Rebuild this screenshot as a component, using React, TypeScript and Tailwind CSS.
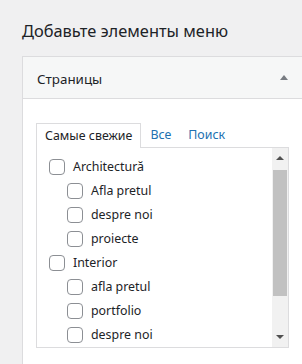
import React from 'react';

type Item = { label: string; level: 0 | 1 };

const items: Item[] = [
  { label: 'Architectură', level: 0 },
  { label: 'Afla pretul', level: 1 },
  { label: 'despre noi', level: 1 },
  { label: 'proiecte', level: 1 },
  { label: 'Interior', level: 0 },
  { label: 'afla pretul', level: 1 },
  { label: 'portfolio', level: 1 },
  { label: 'despre noi', level: 1 },
  { label: 'proiecte', level: 1 },
];

function Checkbox() {
  return <span className="shrink-0 w-4 h-4 rounded-[4px] border border-[#8c8f94] bg-white" />;
}

function Scrollbar() {
  return (
    <div className="shrink-0 w-[16px] bg-[#f1f1f1] flex flex-col items-center">
      <div className="h-[20px] flex items-center justify-center">
        <span className="w-0 h-0 border-x-[4px] border-x-transparent border-b-[4px] border-b-[#505050]" />
      </div>
      <div className="w-[14px] h-[126px] bg-[#c1c1c1] mt-[2px]" />
      <div className="flex-1" />
      <div className="h-[21px] flex items-center justify-center">
        <span className="w-0 h-0 border-x-[4px] border-x-transparent border-t-[4px] border-t-[#505050]" />
      </div>
    </div>
  );
}

export default function App() {
  return (
    <div
      className="w-screen h-screen overflow-hidden bg-[#f0f0f1] text-[#1d2327]"
      style={{ fontFamily: '"Noto Sans", "Open Sans", sans-serif' }}
    >
      <h2 className="pl-[22px] pt-[19px] text-[16.4px] leading-[24px] font-normal whitespace-nowrap">
        Добавьте элементы меню
      </h2>

      <div className="ml-[22px] mt-[13px] w-[330px] h-[400px] border border-[#dcdcde] bg-white">
        <div className="h-[42px] bg-[#f6f7f7] border-b border-[#dcdcde] flex items-center pl-[14px]">
          <h3 className="w-[243px] text-[13.4px] font-normal pt-[3px]">Страницы</h3>
          <span className="w-0 h-0 border-x-[4px] border-x-transparent border-b-[5px] border-b-[#787c82]" />
        </div>

        <div className="pl-[13px] pt-[25px]">
          <div className="flex items-end text-[12.4px] h-[24px]">
            <div className="h-[25px] px-[8px] border border-b-0 border-[#dcdcde] bg-white flex items-center relative z-10">
              Самые свежие
            </div>
            <span className="ml-[9px] mb-[3px] text-[#2271b1]">Все</span>
            <span className="ml-[17px] mb-[3px] text-[#2271b1]">Поиск</span>
          </div>

          <div className="w-[253px] h-[201px] border border-[#dcdcde] flex -mt-px">
            <ul className="flex-1 overflow-hidden pl-[12px] pt-[11px] text-[12.4px]">
              {items.map((it, i) => (
                <li
                  key={i}
                  className={`h-[24px] flex items-start gap-[8px] ${it.level === 1 ? 'pl-[18px]' : ''}`}
                >
                  <Checkbox />
                  <span className="leading-[16px]">{it.label}</span>
                </li>
              ))}
            </ul>
            <Scrollbar />
          </div>
        </div>
      </div>
    </div>
  );
}
